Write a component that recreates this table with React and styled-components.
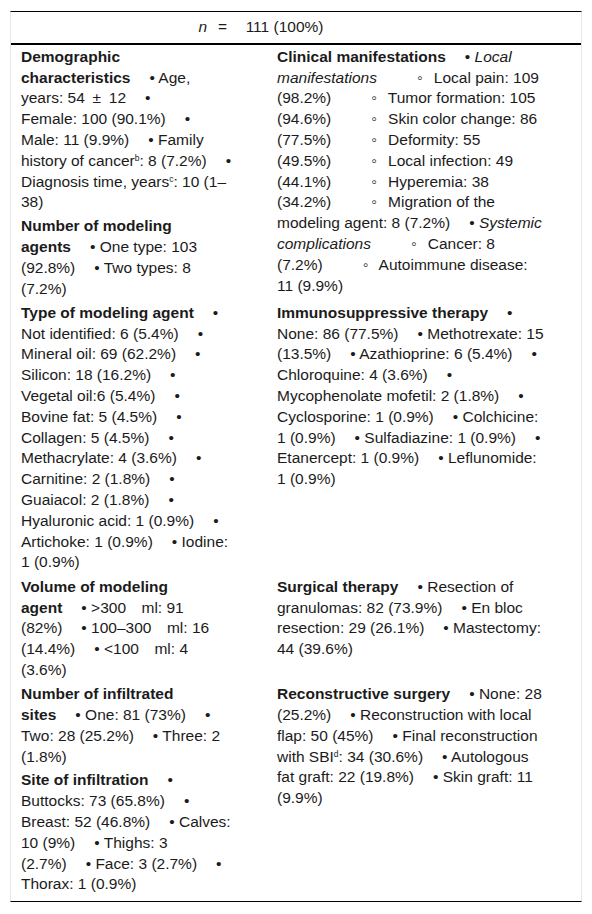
import React from 'react';
import styled, { createGlobalStyle } from 'styled-components';

const GlobalStyle = createGlobalStyle`
  body {
    margin: 0;
    background: #ffffff;
    font-family: "Liberation Sans", Arial, sans-serif;
    color: #1b1b1b;
  }
`;

const Table = styled.div`
  margin: 11px 10px 0 10px;
  width: 570px;
  border-top: 1px solid #000;
  border-bottom: 1px solid #000;
  border-left: 1px solid #e6e6e6;
  border-right: 1px solid #e6e6e6;
  font-size: 15.5px;
  line-height: 20.8px;
`;

const Header = styled.div`
  padding: 5px 70px 5px 0;
  text-align: center;
  border-bottom: 2px solid #000;
  white-space: pre;
`;

const Body = styled.div`
  display: grid;
  grid-template-columns: 255px 1fr;
  padding-bottom: 4px;
`;

const Cell = styled.div`
  display: flex;
  flex-direction: column;
  gap: 3px;
  padding: ${(p) => (p.$right ? '2px 35px 1.5px 11px' : '2px 33px 1.5px 10px')};
`;

const Block = styled.p`
  margin: 0;
`;

const Head = styled.b`
  font-weight: 700;
`;

const Mark = styled.span`
  margin-left: 19px;
`;

const SubMark = styled.span`
  margin-left: 40px;
  margin-right: 7px;
`;

const Sup = styled.sup`
  font-size: 0.55em;
  line-height: 0;
  vertical-align: 0.55em;
`;

const nb = '\u00a0';

const sections = [
  {
    left: [
      {
        title: 'Demographic characteristics',
        items: [
          { text: 'Age, years: 54\u2002±\u200212' },
          { text: `Female:${nb}100 (90.1%)` },
          { text: `Male:${nb}11 (9.9%)` },
          { text: <>Family history of cancer<Sup>b</Sup>: 8 (7.2%)</> },
          { text: <>Diagnosis time, years<Sup>c</Sup>: 10 (1–38)</> },
        ],
      },
      {
        title: 'Number of modeling agents',
        items: [{ text: 'One type: 103 (92.8%)' }, { text: 'Two types: 8 (7.2%)' }],
      },
    ],
    right: [
      {
        title: 'Clinical manifestations',
        items: [
          { text: <em>Local manifestations</em> },
          { sub: true, text: 'Local pain: 109 (98.2%)' },
          { sub: true, text: 'Tumor formation: 105 (94.6%)' },
          { sub: true, text: 'Skin color change: 86 (77.5%)' },
          { sub: true, text: 'Deformity: 55 (49.5%)' },
          { sub: true, text: 'Local infection: 49 (44.1%)' },
          { sub: true, text: 'Hyperemia: 38 (34.2%)' },
          { sub: true, text: 'Migration of the modeling agent: 8 (7.2%)' },
          { text: <em>Systemic complications</em> },
          { sub: true, text: 'Cancer: 8 (7.2%)' },
          { sub: true, text: 'Autoimmune disease: 11 (9.9%)' },
        ],
      },
    ],
  },
  {
    left: [
      {
        title: 'Type of modeling agent',
        items: [
          { text: 'Not identified: 6 (5.4%)' },
          { text: 'Mineral oil: 69 (62.2%)' },
          { text: 'Silicon: 18 (16.2%)' },
          { text: `Vegetal${nb}oil:6 (5.4%)` },
          { text: `Bovine${nb}fat: 5 (4.5%)` },
          { text: 'Collagen: 5 (4.5%)' },
          { text: 'Methacrylate: 4 (3.6%)' },
          { text: 'Carnitine: 2 (1.8%)' },
          { text: 'Guaiacol: 2 (1.8%)' },
          { text: 'Hyaluronic acid: 1 (0.9%)' },
          { text: 'Artichoke: 1 (0.9%)' },
          { text: 'Iodine: 1 (0.9%)' },
        ],
      },
    ],
    right: [
      {
        title: 'Immunosuppressive therapy',
        items: [
          { text: 'None: 86 (77.5%)' },
          { text: 'Methotrexate: 15 (13.5%)' },
          { text: 'Azathioprine: 6 (5.4%)' },
          { text: 'Chloroquine: 4 (3.6%)' },
          { text: 'Mycophenolate mofetil: 2 (1.8%)' },
          { text: 'Cyclosporine: 1 (0.9%)' },
          { text: 'Colchicine: 1 (0.9%)' },
          { text: 'Sulfadiazine: 1 (0.9%)' },
          { text: 'Etanercept: 1 (0.9%)' },
          { text: 'Leflunomide: 1 (0.9%)' },
        ],
      },
    ],
  },
  {
    left: [
      {
        title: 'Volume of modeling agent',
        items: [
          { text: '>300\u2003ml: 91 (82%)' },
          { text: '100–300\u2003ml: 16 (14.4%)' },
          { text: '<100\u2003ml: 4 (3.6%)' },
        ],
      },
    ],
    right: [
      {
        title: 'Surgical therapy',
        items: [
          { text: 'Resection of granulomas: 82 (73.9%)' },
          { text: 'En bloc resection: 29 (26.1%)' },
          { text: 'Mastectomy: 44 (39.6%)' },
        ],
      },
    ],
  },
  {
    left: [
      {
        title: 'Number of infiltrated sites',
        items: [{ text: 'One: 81 (73%)' }, { text: 'Two: 28 (25.2%)' }, { text: 'Three: 2 (1.8%)' }],
      },
      {
        title: 'Site of infiltration',
        items: [
          { text: 'Buttocks: 73 (65.8%)' },
          { text: 'Breast: 52 (46.8%)' },
          { text: 'Calves: 10 (9%)' },
          { text: 'Thighs: 3 (2.7%)' },
          { text: 'Face: 3 (2.7%)' },
          { text: 'Thorax: 1 (0.9%)' },
        ],
      },
    ],
    right: [
      {
        title: 'Reconstructive surgery',
        items: [
          { text: 'None: 28 (25.2%)' },
          { text: 'Reconstruction with local flap: 50 (45%)' },
          { text: <>Final reconstruction with SBI<Sup>d</Sup>: 34 (30.6%)</> },
          { text: 'Autologous fat graft: 22 (19.8%)' },
          { text: 'Skin graft: 11 (9.9%)' },
        ],
      },
    ],
  },
];

const Group = ({ title, items }) => (
  <Block>
    <Head>{title}</Head>
    {items.map((item, i) => (
      <React.Fragment key={i}>
        {item.sub ? <SubMark>◦</SubMark> : <Mark>•</Mark>} {item.text}
      </React.Fragment>
    ))}
  </Block>
);

const App = () => (
  <>
    <GlobalStyle />
    <Table>
      <Header>
        <i>n</i>
        {'\u2002\u2009=\u2003\u2009111 (100%)'}
      </Header>
      <Body>
        {sections.map((row, r) => (
          <React.Fragment key={r}>
            <Cell>
              {row.left.map((g) => (
                <Group key={g.title} {...g} />
              ))}
            </Cell>
            <Cell $right>
              {row.right.map((g) => (
                <Group key={g.title} {...g} />
              ))}
            </Cell>
          </React.Fragment>
        ))}
      </Body>
    </Table>
  </>
);

export default App;
